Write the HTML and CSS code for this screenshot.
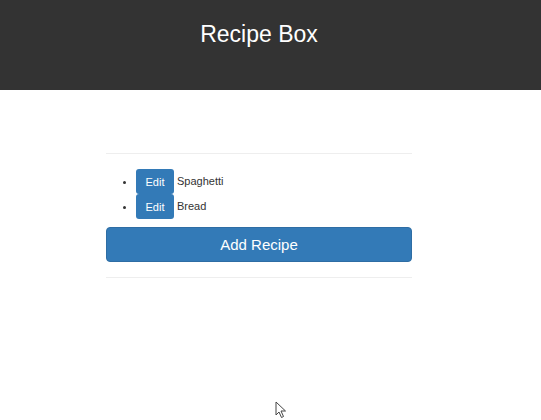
FILE: index.html
```html
<!DOCTYPE html>
<html>
<head>
<meta charset="utf-8">
<link rel="stylesheet" href="styles.css">
</head>
<body>
<header class="header">
  <div class="header-inner">
    <h1 class="title">Recipe Box</h1>
  </div>
</header>
<main class="box">
  <hr class="rule">
  <ul class="recipes">
    <li class="recipe"><button class="btn-edit">Edit</button><span class="name">Spaghetti</span></li>
    <li class="recipe"><button class="btn-edit">Edit</button><span class="name">Bread</span></li>
  </ul>
  <button class="btn-add">Add Recipe</button>
  <hr class="rule">
</main>
<svg class="cursor" width="12" height="18" viewBox="0 0 12 18"><path d="M1 1 L1 14 L4 11 L6.5 16.5 L8.5 15.5 L6 10 L10.5 10 Z" fill="#fff" stroke="#444" stroke-width="1"/></svg>
</body>
</html>
```
FILE: styles.css
```css
html, body {
  margin: 0;
  padding: 0;
  background: #fff;
  font-family: "Liberation Sans", Arial, sans-serif;
  color: #333;
  height: 420px;
  overflow: hidden;
  position: relative;
}
.header {
  background: #333333;
  height: 90px;
}
.header-inner {
  width: 518px;
  text-align: center;
  padding-top: 21px;
}
.title {
  margin: 0;
  font-size: 23px;
  font-weight: normal;
  color: #fff;
  line-height: 27px;
}
.box {
  width: 306px;
  margin-left: 106px;
  padding-top: 63px;
}
.rule {
  border: 0;
  border-top: 1px solid #eee;
  margin: 0;
}
.recipes {
  margin: 15px 0 8px 0;
  padding-left: 30px;
  font-size: 11px;
}
.recipe {
  height: 25px;
  line-height: 25px;
}
.btn-edit {
  background: #337ab7;
  color: #fff;
  border: 0;
  border-radius: 3px;
  width: 38px;
  height: 25px;
  padding: 0;
  font-family: inherit;
  font-size: 11px;
  vertical-align: top;
  margin-right: 3px;
}
.name {
  display: inline-block;
  line-height: 24px;
  vertical-align: top;
  color: #333;
}
.btn-add {
  display: block;
  width: 306px;
  height: 35px;
  background: #337ab7;
  color: #fff;
  border: 1px solid #2e6da4;
  border-radius: 4px;
  font-family: inherit;
  font-size: 15px;
  padding: 0;
  margin-bottom: 15px;
}
.cursor {
  position: absolute;
  left: 275px;
  top: 401px;
}
```
